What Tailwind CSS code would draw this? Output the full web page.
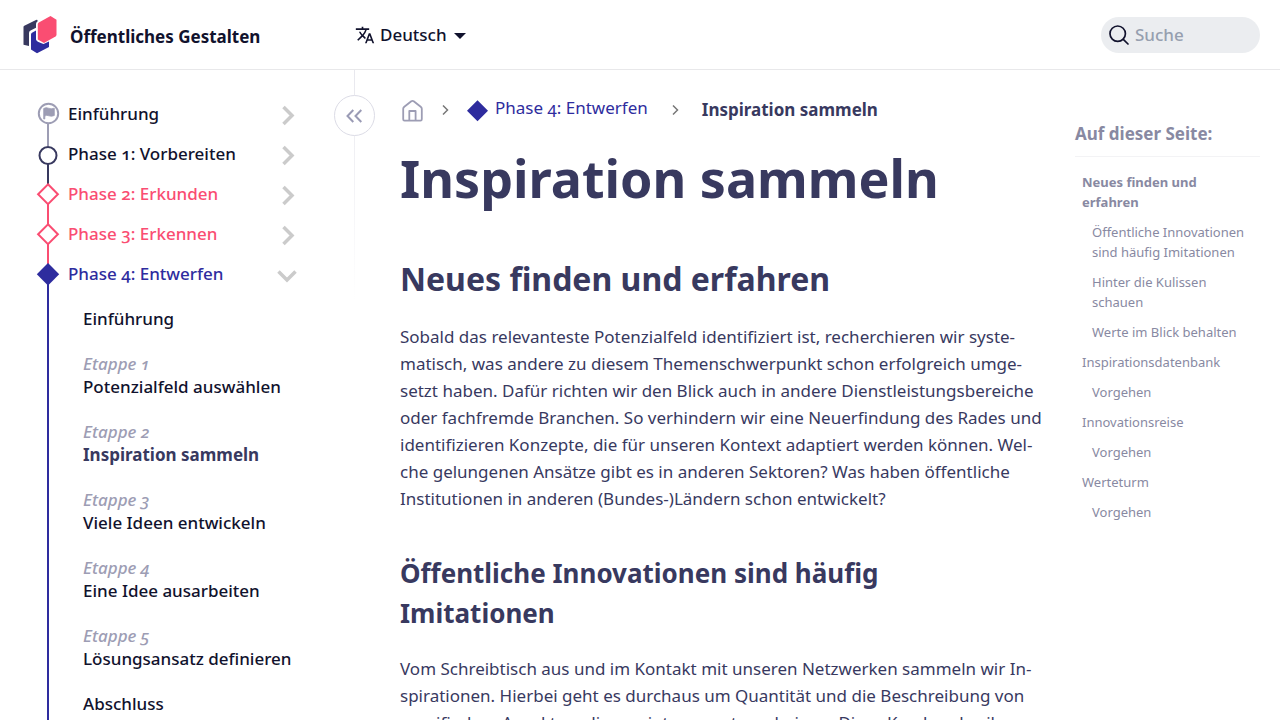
<!DOCTYPE html>
<html lang="de">
<head>
<meta charset="utf-8">
<title>Inspiration sammeln – Öffentliches Gestalten</title>
<script src="https://cdn.jsdelivr.net/npm/@tailwindcss/browser@4"></script>
</head>
<body class="flex h-screen flex-col overflow-hidden bg-white font-['Noto_Sans','Open_Sans',sans-serif] text-[17px] text-[#38395f] oldstyle-nums">

<header class="flex h-[70px] shrink-0 items-center border-b border-[#e8e8ea] pr-5 pl-[23px] text-[#11122d]">
  <a href="#" class="flex w-[332px] items-center gap-[13px] font-bold">
    <svg class="h-[38px] w-[34px]" viewBox="0 0 34 38" aria-hidden="true">
      <path d="M13.500 3.800 1.300 9.800Q.5 10.300.5 11V28.800L6 30V17Q6 15.500 7.500 14.600L13 11.800V8Q13 6.500 14.500 5.600V4Z" fill="#38395f"/>
      <path d="M13 14.500 9 16.700Q8 17.300 8 18.500V33.500L14 37.300 26 31V25.500L20.500 28Q13 25.500 13 23.500Z" fill="#2e2c9e"/>
      <path d="M27.500 0 15.800 6.500Q14.800 7.100 14.800 8.500V23.500L21 27 32.500 20.500Q33.500 19.900 33.500 18.500V3.800Z" fill="#fa4d72"/>
    </svg>
    <span class="pt-1">Öffentliches Gestalten</span>
  </a>
  <button type="button" class="flex items-center font-medium">
    <svg class="mr-[5px] size-5" viewBox="0 0 24 24" fill="currentColor" aria-hidden="true"><path d="m12.870 15.070-2.540-2.510.03-.03A17.520 17.520 0 0 0 14.070 6H17V4h-7V2H8v2H1v2h11.170C11.500 7.920 10.440 9.750 9 11.350 8.070 10.320 7.300 9.190 6.690 8h-2c.73 1.630 1.730 3.170 2.980 4.560l-5.090 5.020L4 19l5-5 3.110 3.110.76-2.040zM18.500 10h-2L12 22h2l1.120-3h4.750L21 22h2l-4.500-12zm-2.620 7 1.620-4.330L19.120 17h-3.240z"/></svg>
    Deutsch
    <svg class="mt-[3px] ml-[7px] h-[6px] w-3" viewBox="0 0 12 6" fill="currentColor" aria-hidden="true"><path d="M0 0h12L6 6z"/></svg>
  </button>
  <label class="ml-auto flex h-9 w-[159px] items-center gap-[6px] rounded-full bg-[#ebedf0] pl-2">
    <svg class="size-5 shrink-0" viewBox="0 0 20 20" fill="none" stroke="currentColor" stroke-width="1.700" stroke-linecap="round" aria-hidden="true"><circle cx="8.700" cy="8.700" r="7.700"/><path d="m14.300 14.300 4.700 4.700"/></svg>
    <input type="search" aria-label="Suche" placeholder="Suche" class="w-0 flex-1 bg-transparent font-medium outline-none placeholder:text-[#969faf]">
  </label>
</header>

<div class="flex min-h-0 flex-1">
  <aside class="relative flex w-[355px] shrink-0 flex-col pt-6 pr-[57px] pl-9 font-medium text-[#11122d]">
    <div class="absolute top-0 right-0 h-[230px] w-px bg-linear-to-b from-[#e8e8ee] to-white"></div>
    <button type="button" aria-label="Seitenleiste einklappen" class="absolute top-[25px] -right-5 z-10 flex size-[41px] items-center justify-center rounded-full border border-[#dcdce6] bg-white pr-px text-[#9a9bb5]">
      <svg class="h-[14px] w-4" viewBox="0 0 16 14" fill="none" stroke="currentColor" stroke-width="2" aria-hidden="true"><path d="M7.300 1 1.500 7l5.800 6M15.300 1 9.500 7l5.800 6"/></svg>
    </button>

    <nav aria-label="Phasen" class="flex flex-1 flex-col">
      <ul>
        <li class="flex h-10 items-center">
          <svg class="h-10 w-6 shrink-0" viewBox="0 0 24 40" aria-hidden="true"><path d="M12 30v10" stroke="#9d9db4" stroke-width="2"/><circle cx="12.500" cy="19.500" r="9.700" fill="#fff" stroke="#9d9db4" stroke-width="2"/><path d="M7.700 14.500Q10 13 12.500 14.200T18.300 14.200V21.500Q15.500 22.800 13 21.800T8.800 22V25H7.700Z" fill="#9d9db4" stroke="#9d9db4" stroke-width=".8"/></svg>
          <a href="#" class="ml-2 flex-1">Einführung</a>
          <button type="button" aria-label="Einführung aufklappen"><svg class="h-6 w-[22px]" viewBox="0 0 22 24" fill="none" stroke="#cbcbcb" stroke-width="3.500" aria-hidden="true"><path d="m7.500 5 8.500 8.500L7.500 22"/></svg></button>
        </li>
        <li class="flex h-10 items-center">
          <svg class="h-10 w-6 shrink-0" viewBox="0 0 24 40" aria-hidden="true"><path d="M12 0v12" stroke="#9d9db4" stroke-width="2"/><path d="M12 30v10" stroke="#38395f" stroke-width="2"/><circle cx="12" cy="21.500" r="8.500" fill="#fff" stroke="#38395f" stroke-width="2"/></svg>
          <a href="#" class="ml-2 flex-1">Phase 1: Vorbereiten</a>
          <button type="button" aria-label="Phase 1 aufklappen"><svg class="h-6 w-[22px]" viewBox="0 0 22 24" fill="none" stroke="#cbcbcb" stroke-width="3.500" aria-hidden="true"><path d="m7.500 5 8.500 8.500L7.500 22"/></svg></button>
        </li>
        <li class="flex h-10 items-center text-[#fa4d72]">
          <svg class="h-10 w-6 shrink-0" viewBox="0 0 24 40" aria-hidden="true"><path d="M12 0v12" stroke="#38395f" stroke-width="2"/><path d="M12 30v10" stroke="currentColor" stroke-width="2"/><path d="m12 10.300 9.900 9.900-9.900 9.900-9.900-9.900z" fill="#fff" stroke="currentColor" stroke-width="2"/></svg>
          <a href="#" class="ml-2 flex-1">Phase 2: Erkunden</a>
          <button type="button" aria-label="Phase 2 aufklappen"><svg class="h-6 w-[22px]" viewBox="0 0 22 24" fill="none" stroke="#cbcbcb" stroke-width="3.500" aria-hidden="true"><path d="m7.500 5 8.500 8.500L7.500 22"/></svg></button>
        </li>
        <li class="flex h-10 items-center text-[#fa4d72]">
          <svg class="h-10 w-6 shrink-0" viewBox="0 0 24 40" aria-hidden="true"><path d="M12 0v40" stroke="currentColor" stroke-width="2"/><path d="m12 10.300 9.900 9.900-9.900 9.900-9.900-9.900z" fill="#fff" stroke="currentColor" stroke-width="2"/></svg>
          <a href="#" class="ml-2 flex-1">Phase 3: Erkennen</a>
          <button type="button" aria-label="Phase 3 aufklappen"><svg class="h-6 w-[22px]" viewBox="0 0 22 24" fill="none" stroke="#cbcbcb" stroke-width="3.500" aria-hidden="true"><path d="m7.500 5 8.500 8.500L7.500 22"/></svg></button>
        </li>
        <li class="flex h-10 items-center text-[#2e2c9e]">
          <svg class="h-10 w-6 shrink-0" viewBox="0 0 24 40" aria-hidden="true"><path d="M12 0v12" stroke="#fa4d72" stroke-width="2"/><path d="M12 28v12" stroke="currentColor" stroke-width="2"/><path d="m12 9 11.200 11.200L12 31.400.8 20.200z" fill="currentColor"/></svg>
          <a href="#" class="ml-2 flex-1">Phase 4: Entwerfen</a>
          <button type="button" aria-label="Phase 4 zuklappen"><svg class="h-6 w-[22px]" viewBox="0 0 22 24" fill="none" stroke="#cbcbcb" stroke-width="3.500" aria-hidden="true"><path d="m2.500 9.500 8.500 8.500 8.500-8.500"/></svg></button>
        </li>
      </ul>
      <ul class="ml-[11px] flex min-h-0 flex-1 flex-col gap-[22px] border-l-2 border-[#2e2c9e] pt-[13px] pl-[34px] leading-[23px] whitespace-nowrap">
        <li><a href="#">Einführung</a></li>
        <li><a href="#"><span class="block text-[#9d9db4] italic">Etappe 1</span>Potenzialfeld auswählen</a></li>
        <li><a href="#" class="font-bold text-[#38395f]"><span class="block font-medium text-[#9d9db4] italic">Etappe 2</span>Inspiration sammeln</a></li>
        <li><a href="#"><span class="block text-[#9d9db4] italic">Etappe 3</span>Viele Ideen entwickeln</a></li>
        <li><a href="#"><span class="block text-[#9d9db4] italic">Etappe 4</span>Eine Idee ausarbeiten</a></li>
        <li><a href="#"><span class="block text-[#9d9db4] italic">Etappe 5</span>Lösungsansatz definieren</a></li>
        <li><a href="#">Abschluss</a></li>
      </ul>
    </nav>
  </aside>

  <main class="min-w-0 flex-1 pl-[45px]">
    <nav aria-label="Brotkrumen" class="mt-7 flex h-6 items-center">
      <a href="#" aria-label="Startseite"><svg class="size-6" viewBox="0 0 24 24" fill="none" stroke="#9d9db4" stroke-width="1.800" stroke-linejoin="round" aria-hidden="true"><path d="M4.300 8.700 11.300 3.200Q12.500 2.400 13.700 3.200L20.700 8.700Q21.800 9.600 21.800 10.800V21.300Q21.800 22.600 20.500 22.600H4.500Q3.200 22.600 3.200 21.300V10.800Q3.200 9.600 4.300 8.700ZM9.300 22.600V13h6.300v9.600"/></svg></a>
      <svg class="mx-4 h-[10px] w-[10px]" viewBox="0 0 10 10" fill="none" stroke="#777" stroke-width="1.500" aria-hidden="true"><path d="m3 .5 4.500 4.500L3 9.500"/></svg>
      <a href="#" class="flex items-center gap-[6px] text-[#2e2c9e]"><svg class="size-[23px]" viewBox="0 0 23 23" fill="currentColor" aria-hidden="true"><path d="m11.500 1.200 10.500 10.500-10.500 10.500L1 11.700z"/></svg><span class="pb-1">Phase 4: Entwerfen</span></a>
      <svg class="mx-[22px] h-[10px] w-[10px]" viewBox="0 0 10 10" fill="none" stroke="#777" stroke-width="1.500" aria-hidden="true"><path d="m3 .5 4.500 4.500L3 9.500"/></svg>
      <span class="font-bold">Inspiration sammeln</span>
    </nav>
    <article class="whitespace-nowrap">
      <h1 class="mt-6 text-[52px] leading-[64px] font-bold">Inspiration sammeln</h1>
      <h2 class="mt-[47px] text-[32px] leading-[44px] font-bold">Neues finden und erfahren</h2>
      <p class="mt-[22px] leading-[27px]">Sobald das relevanteste Potenzialfeld identifiziert ist, recherchieren wir syste-<br>matisch, was andere zu diesem Themenschwerpunkt schon erfolgreich umge-<br>setzt haben. Dafür richten wir den Blick auch in andere Dienstleistungsbereiche<br>oder fachfremde Branchen. So verhindern wir eine Neuerfindung des Rades und<br>identifizieren Konzepte, die für unseren Kontext adaptiert werden können. Wel-<br>che gelungenen Ansätze gibt es in anderen Sektoren? Was haben öffentliche<br>Institutionen in anderen (Bundes-)Ländern schon entwickelt?</p>
      <h3 class="mt-[41px] text-[26px] leading-10 font-bold">Öffentliche Innovationen sind häufig<br>Imitationen</h3>
      <p class="mt-[22px] leading-[27px]">Vom Schreibtisch aus und im Kontakt mit unseren Netzwerken sammeln wir In-<br>spirationen. Hierbei geht es durchaus um Quantität und die Beschreibung von<br>spezifischen Aspekten, die uns interessant erscheinen. Diese Kurzbeschreibun-</p>
    </article>
  </main>

  <nav aria-labelledby="toc-title" class="mt-[50px] mr-5 w-[185px] shrink-0 text-[13px] leading-5 text-[#8889a2]">
    <h2 id="toc-title" class="border-b border-[#f3f3f5] pt-[2px] pb-[10px] text-[17px] leading-6 font-bold">Auf dieser Seite:</h2>
    <ul class="mt-[15px] flex flex-col gap-[10px] pl-[7px] whitespace-nowrap">
      <li><a href="#" class="block font-bold">Neues finden und<br>erfahren</a></li>
      <li class="pl-[10px]"><a href="#" class="block">Öffentliche Innovationen<br>sind häufig Imitationen</a></li>
      <li class="pl-[10px]"><a href="#" class="block">Hinter die Kulissen<br>schauen</a></li>
      <li class="pl-[10px]"><a href="#" class="block">Werte im Blick behalten</a></li>
      <li><a href="#" class="block">Inspirationsdatenbank</a></li>
      <li class="pl-[10px]"><a href="#" class="block">Vorgehen</a></li>
      <li><a href="#" class="block">Innovationsreise</a></li>
      <li class="pl-[10px]"><a href="#" class="block">Vorgehen</a></li>
      <li><a href="#" class="block">Werteturm</a></li>
      <li class="pl-[10px]"><a href="#" class="block">Vorgehen</a></li>
    </ul>
  </nav>
</div>
</body>
</html>
